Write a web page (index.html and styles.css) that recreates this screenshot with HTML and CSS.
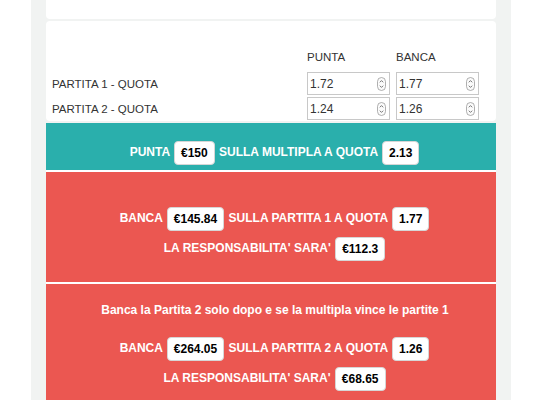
FILE: index.html
```html
<!DOCTYPE html>
<html lang="it">
<head>
    <meta charset="UTF-8">
    <meta name="viewport" content="width=device-width, initial-scale=1.0">
    <title>Calcolatore Multipla</title>
    <link rel="stylesheet" href="styles.css">
</head>
<body>

<div class="page">
    <div class="card card-top"></div>

    <div class="card">
        <div class="quote-table">
            <div></div>
            <div class="col-head">PUNTA</div>
            <div class="col-head">BANCA</div>

            <div class="row-label">PARTITA 1 - QUOTA</div>
            <div class="num-field"><input type="text" value="1.72"><svg class="spin" viewBox="0 0 9 14"><rect x="0.5" y="0.5" width="8" height="13" rx="4" /><path d="M2.8 5.3 L4.5 3.6 L6.2 5.3 M2.8 8.7 L4.5 10.4 L6.2 8.7" /></svg></div>
            <div class="num-field"><input type="text" value="1.77"><svg class="spin" viewBox="0 0 9 14"><rect x="0.5" y="0.5" width="8" height="13" rx="4" /><path d="M2.8 5.3 L4.5 3.6 L6.2 5.3 M2.8 8.7 L4.5 10.4 L6.2 8.7" /></svg></div>

            <div class="row-label">PARTITA 2 - QUOTA</div>
            <div class="num-field"><input type="text" value="1.24"><svg class="spin" viewBox="0 0 9 14"><rect x="0.5" y="0.5" width="8" height="13" rx="4" /><path d="M2.8 5.3 L4.5 3.6 L6.2 5.3 M2.8 8.7 L4.5 10.4 L6.2 8.7" /></svg></div>
            <div class="num-field"><input type="text" value="1.26"><svg class="spin" viewBox="0 0 9 14"><rect x="0.5" y="0.5" width="8" height="13" rx="4" /><path d="M2.8 5.3 L4.5 3.6 L6.2 5.3 M2.8 8.7 L4.5 10.4 L6.2 8.7" /></svg></div>
        </div>
    </div>

    <div class="result result-punta">
        <div class="line">PUNTA <span class="badge">€150</span> SULLA MULTIPLA A QUOTA <span class="badge">2.13</span></div>
    </div>

    <div class="result result-banca first">
        <div class="line">BANCA <span class="badge">€145.84</span> SULLA PARTITA 1 A QUOTA <span class="badge">1.77</span></div>
        <div class="line">LA RESPONSABILITA' SARA' <span class="badge">€112.3</span></div>
    </div>

    <div class="result result-banca second">
        <p class="note">Banca la Partita 2 solo dopo e se la multipla vince le partite 1</p>
        <div class="line">BANCA <span class="badge">€264.05</span> SULLA PARTITA 2 A QUOTA <span class="badge">1.26</span></div>
        <div class="line">LA RESPONSABILITA' SARA' <span class="badge">€68.65</span></div>
    </div>
</div>

</body>
</html>
```

FILE: styles.css
```css
body {
    font-family: 'Liberation Sans', Arial, sans-serif;
    margin: 0;
    padding: 0;
    background-color: #fff;
    color: #333;
}

.page {
    width: 450px;
    min-height: 400px;
    margin-left: 31px;
    padding: 0 15px;
    background-color: #f1f3f2;
}

.card {
    background-color: white;
    border-radius: 4px;
    margin-bottom: 2px;
}

.card-top {
    height: 19px;
    border-radius: 0 0 4px 4px;
}

/* Quote table */
.quote-table {
    display: grid;
    grid-template-columns: 1fr 83px 83px;
    column-gap: 6px;
    row-gap: 2px;
    align-items: center;
    padding: 29px 17px 1px 6px;
    font-size: 11.5px;
}

.col-head {
    line-height: 14px;
    padding-bottom: 6px;
}

.row-label {
    line-height: 14px;
    padding-top: 1px;
}

.num-field {
    display: flex;
    align-items: center;
    height: 21px;
    border: 1px solid #c8c8c8;
    background-color: white;
}

.num-field input {
    flex: 1;
    min-width: 0;
    border: none;
    outline: none;
    padding: 0 0 0 2px;
    font-family: inherit;
    font-size: 12px;
    color: #333;
    background: transparent;
}

.spin {
    width: 9px;
    height: 14px;
    margin-right: 3px;
    fill: #fbfbfb;
    stroke: #9a9a9a;
    stroke-width: 0.8;
}

.spin path {
    fill: none;
    stroke: #666;
    stroke-width: 0.9;
}

/* Results */
.result {
    color: white;
    font-weight: bold;
    font-size: 12px;
    text-align: center;
    padding-left: 8px;
}

.result-punta {
    background-color: #2aafac;
    padding-top: 14px;
    padding-bottom: 3px;
}

.result-banca {
    background-color: #eb5751;
    border-top: 2px solid #fff;
}

.result-banca.first {
    padding-top: 31px;
    padding-bottom: 19px;
}

.result-banca.second {
    padding-top: 19px;
    padding-bottom: 10px;
}

.note {
    margin: 0 0 16px;
    line-height: 14px;
}

.line {
    line-height: 30px;
}

.badge {
    display: inline-block;
    line-height: 22px;
    padding: 0 6px;
    margin: 0 1px;
    background-color: white;
    color: #000;
    border: 1px solid #d6d6d6;
    border-radius: 4px;
    vertical-align: middle;
}
```
